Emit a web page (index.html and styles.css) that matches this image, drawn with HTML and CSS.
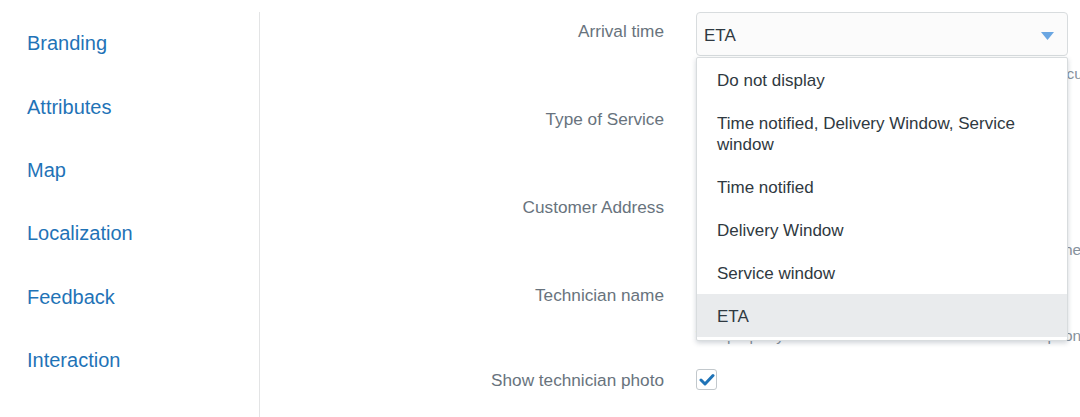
FILE: index.html
```html
<!DOCTYPE html>
<html lang="en">
<head>
<meta charset="utf-8">
<title>Settings</title>
<link rel="stylesheet" href="styles.css">
</head>
<body>
<div class="page">
  <nav class="sidebar">
    <a class="nav-item" href="#">Branding</a>
    <a class="nav-item" href="#">Attributes</a>
    <a class="nav-item" href="#">Map</a>
    <a class="nav-item" href="#">Localization</a>
    <a class="nav-item" href="#">Feedback</a>
    <a class="nav-item" href="#">Interaction</a>
  </nav>
  <main class="form">
    <div class="row">
      <div class="label">Arrival time</div>
      <div class="field">
        <div class="select-wrap">
          <div class="select open">
            <span class="select-value">ETA</span>
            <svg class="caret" width="13" height="8" viewBox="0 0 13 8"><path d="M0 0h13L6.5 8z" fill="#6aa6e2"/></svg>
          </div>
          <ul class="menu">
            <li class="menu-item">Do not display</li>
            <li class="menu-item">Time notified, Delivery Window, Service window</li>
            <li class="menu-item">Time notified</li>
            <li class="menu-item">Delivery Window</li>
            <li class="menu-item">Service window</li>
            <li class="menu-item selected">ETA</li>
          </ul>
        </div>
        <div class="hint">Choose which arrival time information is shown to the customer in the description</div>
      </div>
    </div>
    <div class="row">
      <div class="label">Type of Service</div>
      <div class="field">
        <div class="select"><span class="select-value">Service type</span></div>
      </div>
    </div>
    <div class="row">
      <div class="label">Customer Address</div>
      <div class="field">
        <div class="select"><span class="select-value">Address</span></div>
        <div class="hint">Show the customer address on the tracking page for the addresses</div>
      </div>
    </div>
    <div class="row">
      <div class="label">Technician name</div>
      <div class="field">
        <div class="select"><span class="select-value">Full name</span></div>
        <div class="hint hint-tight">The property used as technician name in the description</div>
      </div>
    </div>
    <div class="row row-check">
      <div class="label">Show technician photo</div>
      <div class="field">
        <span class="checkbox">
          <svg width="16" height="13" viewBox="0 0 16 13"><path d="M2 7l4 4L14 2.5" fill="none" stroke="#1f73b7" stroke-width="3" stroke-linecap="round" stroke-linejoin="round"/></svg>
        </span>
      </div>
    </div>
  </main>
</div>
</body>
</html>
```
FILE: styles.css
```css
html, body {
  margin: 0;
  padding: 0;
  background: #fff;
  overflow: hidden;
}
body {
  width: 1080px;
  height: 417px;
  font-family: "Liberation Sans", Arial, sans-serif;
}
.page {
  display: flex;
  padding-top: 12px;
  height: 405px;
}
.sidebar {
  flex-shrink: 0;
  width: 232px;
  padding-left: 27px;
  border-right: 1px solid #e3e4e5;
  display: flex;
  flex-direction: column;
}
.nav-item {
  flex-shrink: 0;
  height: 63.4px;
  display: flex;
  align-items: center;
  color: #1f73b7;
  text-decoration: none;
  font-size: 20px;
}
.form {
  display: flex;
  flex-direction: column;
  min-width: 0;
}
.row {
  flex-shrink: 0;
  display: grid;
  grid-template-columns: 404px 372px;
  column-gap: 32px;
  height: 88px;
}
.label {
  text-align: right;
  color: #68737d;
  font-size: 17.2px;
  line-height: 20px;
  padding-top: 9px;
}
.field {
  position: relative;
  min-width: 0;
}
.select-wrap {
  position: relative;
}
.select {
  box-sizing: border-box;
  height: 44px;
  border: 1px solid #d8dcde;
  border-radius: 4px;
  background: #fbfbfb;
  display: flex;
  align-items: center;
  justify-content: space-between;
  padding: 4px 13px 0 7px;
  color: #2f3941;
  font-size: 17px;
}
.caret {
  display: block;
}
.menu {
  position: absolute;
  z-index: 5;
  top: 45px;
  left: 0;
  width: 372px;
  box-sizing: border-box;
  margin: 0;
  padding: 0 0 3px;
  list-style: none;
  background: #fff;
  border: 1px solid #d8dcde;
  border-radius: 2px;
  box-shadow: 0 2px 5px rgba(40, 60, 80, 0.22);
}
.menu-item {
  padding: 12px 40px 10px 20px;
  line-height: 21px;
  font-size: 17px;
  color: #2f3941;
}
.menu-item.selected {
  background: #e9ebed;
}
.hint {
  margin-top: 8px;
  white-space: nowrap;
  font-size: 15.5px;
  line-height: 20px;
  color: #87929d;
}
.hint-tight {
  margin-top: 6px;
}
.row-check {
  height: auto;
  align-items: start;
}
.row-check .label {
  padding-top: 6px;
}
.checkbox {
  box-sizing: border-box;
  margin-top: 5px;
  width: 21px;
  height: 21px;
  border: 1px solid #c2c8cc;
  border-radius: 3px;
  background: #fff;
  display: flex;
  align-items: center;
  justify-content: center;
}
```
